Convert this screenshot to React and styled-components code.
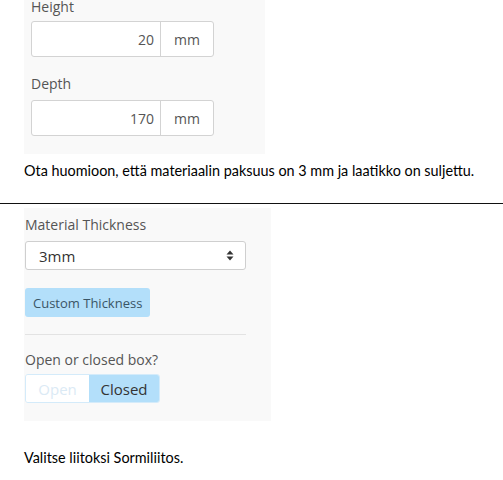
import React from 'react';
import styled, { createGlobalStyle } from 'styled-components';

const Global = createGlobalStyle`
  body {
    margin: 0;
    background: #fff;
  }
`;

const Page = styled.div`
  width: 503px;
  height: 480px;
  overflow: hidden;
  background: #fff;
`;

const Panel = styled.div`
  margin-left: 24px;
  background: #f9f9f9;
  font-family: "Open Sans", "Noto Sans", sans-serif;
  color: #555;
`;

const TopPanel = styled(Panel)`
  width: 234px;
  margin-top: -3px;
  padding: 0 0 18px 7px;
`;

const BottomPanel = styled(Panel)`
  width: 246px;
  padding: 7px 0 18px 1px;
`;

const Label = styled.div`
  font-size: 14px;
  line-height: 20px;
  margin-top: ${p => p.top || 0}px;
  margin-bottom: ${p => p.bottom ?? 6}px;
`;

const InputGroup = styled.div`
  display: flex;
  width: 183px;
  height: 36px;
  box-sizing: border-box;
  border: 1px solid #d3d3d3;
  border-radius: 3px;
  background: #fff;
  font-size: 14px;
`;

const InputValue = styled.div`
  flex: 1;
  display: flex;
  align-items: center;
  justify-content: flex-end;
  padding-right: 6px;
  border-right: 1px solid #d3d3d3;
  color: #555;
`;

const Addon = styled.div`
  width: 52px;
  display: flex;
  align-items: center;
  justify-content: center;
  color: #555;
`;

const Doc = styled.p`
  margin: 0;
  padding-left: 24px;
  font-family: Lato, "Open Sans", sans-serif;
  font-size: 14.4px;
  color: #000;
  line-height: 18px;
  margin-top: ${p => p.top}px;
`;

const Rule = styled.hr`
  margin: 23px 0 4px;
  border: 0;
  border-top: 1px solid #111;
`;

const Select = styled.div`
  width: 221px;
  height: 29px;
  box-sizing: border-box;
  border: 1px solid #cfcfcf;
  border-radius: 3px;
  background: #fff;
  display: flex;
  align-items: center;
  justify-content: space-between;
  padding: 0 11px 0 13px;
  font-size: 15px;
  color: #333;
`;

const Button = styled.div`
  margin-top: 18px;
  display: inline-flex;
  align-items: center;
  height: 29px;
  padding: 0 8px;
  border-radius: 3px;
  background: #b3dffa;
  color: #3a5566;
  font-size: 13px;
`;

const Divider = styled.div`
  width: 221px;
  height: 1px;
  background: #e3e3e3;
  margin: 17px 0 15px;
`;

const Toggle = styled.div`
  display: flex;
  height: 29px;
  width: 135px;
  border-radius: 3px;
  overflow: hidden;
  border: 1px solid #d4ebfa;
  box-sizing: border-box;
`;

const ToggleOption = styled.div`
  width: ${p => p.w}px;
  display: flex;
  align-items: center;
  justify-content: center;
  font-size: 15px;
  background: ${p => (p.active ? '#b3dffa' : '#fff')};
  color: ${p => (p.active ? '#333' : '#dbeaf5')};
`;

const Arrows = () => (
  <svg width="8" height="11" viewBox="0 0 8 11">
    <path d="M4 0.5 L7.5 4.5 H0.5 Z" fill="#333" />
    <path d="M4 10.5 L7.5 6.5 H0.5 Z" fill="#333" />
  </svg>
);

export default function App() {
  return (
    <Page>
      <Global />
      <TopPanel>
        <Label bottom={4}>Height</Label>
        <InputGroup>
          <InputValue>20</InputValue>
          <Addon>mm</Addon>
        </InputGroup>
        <Label top={17}>Depth</Label>
        <InputGroup>
          <InputValue>170</InputValue>
          <Addon>mm</Addon>
        </InputGroup>
      </TopPanel>
      <Doc top={8}>Ota huomioon, että materiaalin paksuus on 3 mm ja laatikko on suljettu.</Doc>
      <Rule />
      <BottomPanel>
        <Label bottom={6}>Material Thickness</Label>
        <Select>
          <span>3mm</span>
          <Arrows />
        </Select>
        <Button>Custom Thickness</Button>
        <Divider />
        <Label bottom={4}>Open or closed box?</Label>
        <Toggle>
          <ToggleOption w={64}>Open</ToggleOption>
          <ToggleOption w={71} active>Closed</ToggleOption>
        </Toggle>
      </BottomPanel>
      <Doc top={28}>Valitse liitoksi Sormiliitos.</Doc>
    </Page>
  );
}
